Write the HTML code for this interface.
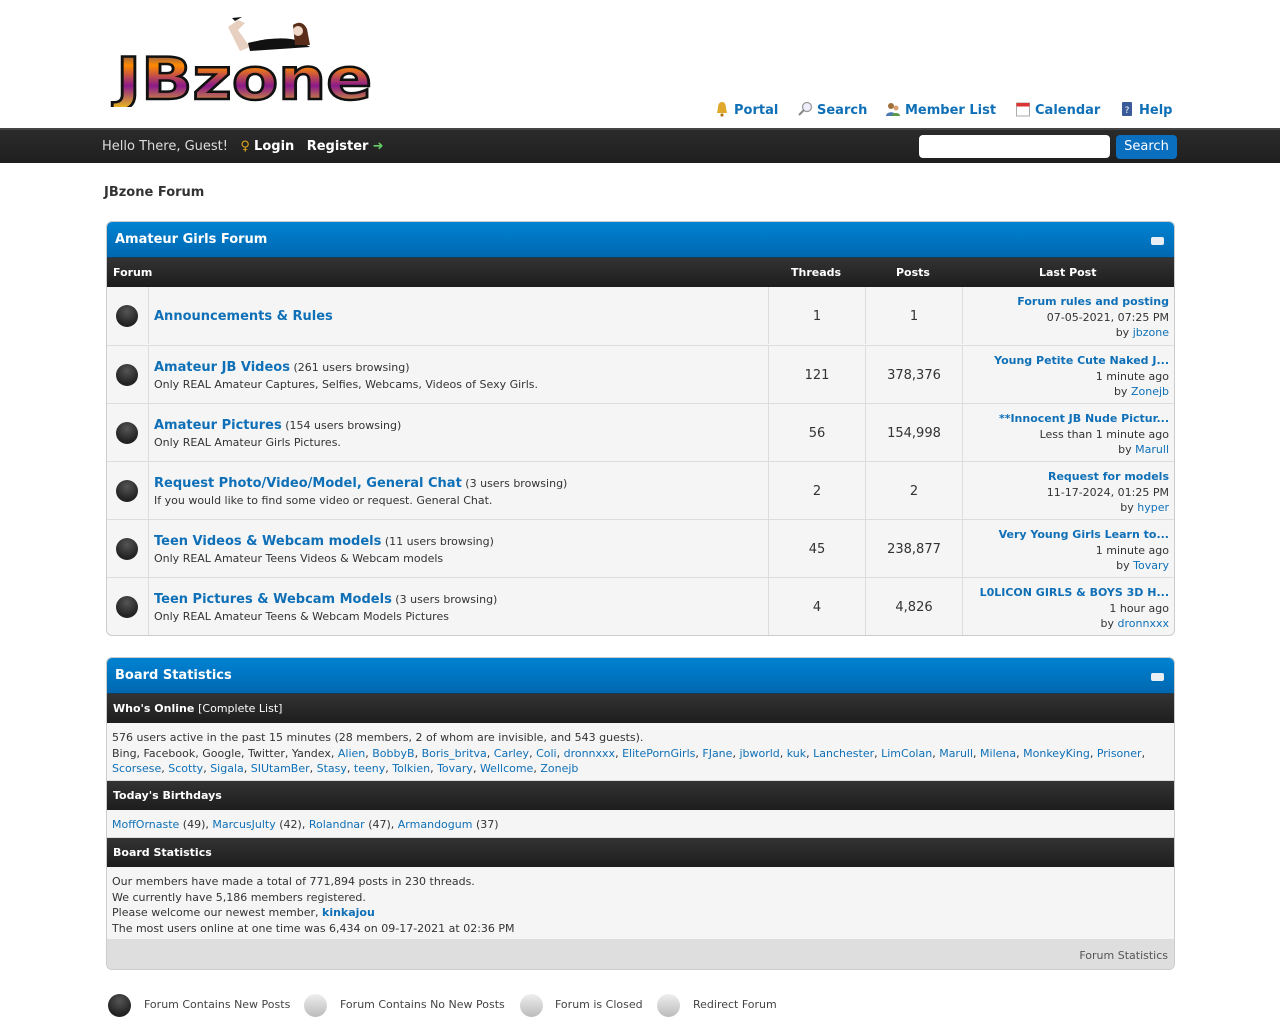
<!DOCTYPE html>
<html><head><meta charset="utf-8"><style>
*{box-sizing:border-box;margin:0;padding:0}
body{width:1280px;height:1024px;overflow:hidden;background:#fff;font-family:"DejaVu Sans","Liberation Sans",sans-serif;font-size:11px;color:#333;position:relative}
a{color:#0f70b7;text-decoration:none}
.abs{position:absolute}
.nav{top:128px;left:0;width:1280px;height:35px;background:linear-gradient(#2b2b2b,#1f1f1f);border-top:2px solid #444}
.tl{position:absolute;top:101px;white-space:nowrap}
.tl a{font-weight:bold;font-size:13px;color:#0f70b7}
.ic{display:inline-block;width:16px;height:16px;vertical-align:-3px;margin-right:4px}
.box{position:absolute;left:106px;width:1069px;border:1px solid #ccc;border-radius:6px;overflow:hidden;background:#f5f5f5}
.thead{height:36px;background:linear-gradient(#0083d3,#0067b0);color:#fff;font-weight:bold;font-size:13px;padding:10px 8px;position:relative;border-bottom:1px solid #1a3b55}
.thead .tg{position:absolute;right:10px;top:15px;width:13px;height:8px;background:#e8eef4;border-radius:2px}
.tcat{background:linear-gradient(#333,#1d1d1d);color:#fff;font-weight:bold;font-size:11px;height:29px;line-height:30px;padding:0 6px;position:relative}
.row{height:58px;position:relative;border-top:1px solid #ddd}
.c{position:absolute;top:0;height:57px;border-left:1px solid #ddd}
.dot{position:absolute;left:9px;top:18px;width:22px;height:22px;border-radius:50%;background:radial-gradient(circle at 50% 30%,#555,#222 70%)}
.fn{font-size:13px;font-weight:bold;color:#0f70b7}
.num{text-align:center;line-height:59px;font-size:13px}
.lp{text-align:right;padding:7px 6px 0 0;line-height:15.5px}
.trow{padding:8px 6px;line-height:15.5px;border-bottom:1px solid #ddd}
</style></head><body>

<svg class="abs" style="left:110px;top:15px" width="270" height="92">
<defs><linearGradient id="g" x1="0" y1="0" x2="0" y2="1"><stop offset="0" stop-color="#223399"/><stop offset=".3" stop-color="#ff8a00"/><stop offset=".6" stop-color="#8b1a8b"/><stop offset="1" stop-color="#ffe000"/></linearGradient></defs>
<path d="M118 12 L128 5 L135 8 L128 15 L140 32 L130 36Z" fill="#e8d0c0"/>
<path d="M125 6 L122 3 L132 2 Z" fill="#111"/>
<path d="M138 28 Q170 20 190 26 L200 32 L140 36Z" fill="#111"/>
<path d="M183 10 Q192 4 197 14 L200 30 L185 30Z" fill="#5a2d1a"/>
<circle cx="188" cy="16" r="5" fill="#f0d8c8"/>
<text x="6" y="84" font-family="DejaVu Sans,sans-serif" font-weight="bold" font-size="58" fill="url(#g)" stroke="#111" stroke-width="2.5" textLength="256" lengthAdjust="spacingAndGlyphs">JBzone</text>
</svg>

<div class="tl" style="left:714px"><svg class="ic" viewBox="0 0 16 16"><path d="M8 1C5 1 4 4 4 7L3 12H13L12 7C12 4 11 1 8 1Z" fill="#e0a82a"/><circle cx="8" cy="14" r="1.6" fill="#b07818"/></svg><a>Portal</a></div>
<div class="tl" style="left:797px"><svg class="ic" viewBox="0 0 16 16"><circle cx="10" cy="6" r="4.5" fill="#eef" stroke="#999" stroke-width="1.3"/><path d="M7 9L2 14" stroke="#888" stroke-width="2"/></svg><a>Search</a></div>
<div class="tl" style="left:885px"><svg class="ic" viewBox="0 0 16 16"><circle cx="6" cy="5" r="3" fill="#a0703a"/><path d="M1 15C1 10 11 10 11 15Z" fill="#4a7ab0"/><circle cx="11" cy="7" r="2.5" fill="#d8a070"/><path d="M7 15C7 11 15 11 15 15Z" fill="#5a9a40"/></svg><a>Member List</a></div>
<div class="tl" style="left:1015px"><svg class="ic" viewBox="0 0 16 16"><rect x="1.5" y="2" width="13" height="13" fill="#fff" stroke="#aaa"/><rect x="1.5" y="2" width="13" height="3.5" fill="#d33"/></svg><a>Calendar</a></div>
<div class="tl" style="left:1119px"><svg class="ic" viewBox="0 0 16 16"><rect x="3" y="1" width="10" height="14" rx="1" fill="#3a5a9a"/><text x="8" y="12" font-size="9" fill="#fff" text-anchor="middle" font-family="DejaVu Sans">?</text></svg><a>Help</a></div>

<div class="abs nav"></div>
<div class="abs" style="top:139px;left:102px;color:#ddd;font-size:13px">Hello There, Guest!&nbsp;&nbsp; <span style="color:#d9a21b">♀</span> <b style="color:#fff">Login</b>&nbsp;&nbsp; <b style="color:#fff">Register</b> <span style="color:#6c6">➜</span></div>
<div class="abs" style="top:135px;left:919px;width:191px;height:23px;background:#fff;border-radius:4px"></div>
<div class="abs" style="top:135px;left:1116px;width:61px;height:24px;background:#0b6fc0;border-radius:4px;color:#fff;font-size:13px;text-align:center;line-height:24px">Search</div>

<div class="abs" style="top:185px;left:104px;font-weight:bold;font-size:13px;color:#333">JBzone Forum</div>

<div class="box" style="top:221px;height:415px">
<div class="thead">Amateur Girls Forum<div class="tg"></div></div>
<div class="tcat">Forum<span class="abs" style="left:684px">Threads</span><span class="abs" style="left:789px">Posts</span><span class="abs" style="left:932px">Last Post</span></div>
<div class="row" style="border-top:none"><div class="dot"></div><div class="c" style="left:41px;width:620px;padding:22px 5px"><a class="fn">Announcements &amp; Rules</a></div><div class="c num" style="left:661px;width:97px">1</div><div class="c num" style="left:758px;width:97px">1</div><div class="c lp" style="left:855px;width:213px"><b><a>Forum rules and posting</a></b><br>07-05-2021, 07:25 PM<br>by <a>jbzone</a></div></div>
<div class="row"><div class="dot"></div><div class="c" style="left:41px;width:620px;padding:13px 5px;line-height:17px"><a class="fn">Amateur JB Videos</a> (261 users browsing)<br>Only REAL Amateur Captures, Selfies, Webcams, Videos of Sexy Girls.</div><div class="c num" style="left:661px;width:97px">121</div><div class="c num" style="left:758px;width:97px">378,376</div><div class="c lp" style="left:855px;width:213px"><b><a>Young Petite Cute Naked J...</a></b><br>1 minute ago<br>by <a>Zonejb</a></div></div>
<div class="row"><div class="dot"></div><div class="c" style="left:41px;width:620px;padding:13px 5px;line-height:17px"><a class="fn">Amateur Pictures</a> (154 users browsing)<br>Only REAL Amateur Girls Pictures.</div><div class="c num" style="left:661px;width:97px">56</div><div class="c num" style="left:758px;width:97px">154,998</div><div class="c lp" style="left:855px;width:213px"><b><a>**Innocent JB Nude Pictur...</a></b><br>Less than 1 minute ago<br>by <a>Marull</a></div></div>
<div class="row"><div class="dot"></div><div class="c" style="left:41px;width:620px;padding:13px 5px;line-height:17px"><a class="fn">Request Photo/Video/Model, General Chat</a> (3 users browsing)<br>If you would like to find some video or request. General Chat.</div><div class="c num" style="left:661px;width:97px">2</div><div class="c num" style="left:758px;width:97px">2</div><div class="c lp" style="left:855px;width:213px"><b><a>Request for models</a></b><br>11-17-2024, 01:25 PM<br>by <a>hyper</a></div></div>
<div class="row"><div class="dot"></div><div class="c" style="left:41px;width:620px;padding:13px 5px;line-height:17px"><a class="fn">Teen Videos &amp; Webcam models</a> (11 users browsing)<br>Only REAL Amateur Teens Videos &amp; Webcam models</div><div class="c num" style="left:661px;width:97px">45</div><div class="c num" style="left:758px;width:97px">238,877</div><div class="c lp" style="left:855px;width:213px"><b><a>Very Young Girls Learn to...</a></b><br>1 minute ago<br>by <a>Tovary</a></div></div>
<div class="row"><div class="dot"></div><div class="c" style="left:41px;width:620px;padding:13px 5px;line-height:17px"><a class="fn">Teen Pictures &amp; Webcam Models</a> (3 users browsing)<br>Only REAL Amateur Teens &amp; Webcam Models Pictures</div><div class="c num" style="left:661px;width:97px">4</div><div class="c num" style="left:758px;width:97px">4,826</div><div class="c lp" style="left:855px;width:213px"><b><a>L0LICON GIRLS &amp; BOYS 3D H...</a></b><br>1 hour ago<br>by <a>dronnxxx</a></div></div>
</div>

<div class="box" style="top:657px;height:313px">
<div class="thead">Board Statistics<div class="tg"></div></div>
<div class="tcat">Who's Online <span style="font-weight:normal">[Complete List]</span></div>
<div class="trow" style="height:58px;padding-top:7px;padding-left:5px">576 users active in the past 15 minutes (28 members, 2 of whom are invisible, and 543 guests).<br>Bing, Facebook, Google, Twitter, Yandex, <a>Alien</a>, <a>BobbyB</a>, <a>Boris_britva</a>, <a>Carley</a>, <a>Coli</a>, <a>dronnxxx</a>, <a>ElitePornGirls</a>, <a>FJane</a>, <a>jbworld</a>, <a>kuk</a>, <a>Lanchester</a>, <a>LimColan</a>, <a>Marull</a>, <a>Milena</a>, <a>MonkeyKing</a>, <a>Prisoner</a>,<br><a>Scorsese</a>, <a>Scotty</a>, <a>Sigala</a>, <a>SIUtamBer</a>, <a>Stasy</a>, <a>teeny</a>, <a>Tolkien</a>, <a>Tovary</a>, <a>Wellcome</a>, <a>Zonejb</a></div>
<div class="tcat">Today's Birthdays</div>
<div class="trow" style="height:28px;padding-top:7px;padding-left:5px"><a>MoffOrnaste</a> (49), <a>MarcusJulty</a> (42), <a>Rolandnar</a> (47), <a>Armandogum</a> (37)</div>
<div class="tcat">Board Statistics</div>
<div class="trow" style="height:73px;padding-top:7px;padding-left:5px">Our members have made a total of 771,894 posts in 230 threads.<br>We currently have 5,186 members registered.<br>Please welcome our newest member, <b><a>kinkajou</a></b><br>The most users online at one time was 6,434 on 09-17-2021 at 02:36 PM</div>
<div style="height:30px;background:#dedede;text-align:right;padding:9px 6px;color:#555">Forum Statistics</div>
</div>

<div class="abs" style="top:993px;left:108px;width:700px;height:24px;color:#444">
<span class="abs" style="left:0;top:1px;width:23px;height:23px;border-radius:50%;background:radial-gradient(circle at 50% 30%,#555,#222 70%)"></span><span class="abs" style="left:36px;top:5px">Forum Contains New Posts</span>
<span class="abs" style="left:196px;top:1px;width:23px;height:23px;border-radius:50%;background:linear-gradient(#eee,#bbb)"></span><span class="abs" style="left:232px;top:5px">Forum Contains No New Posts</span>
<span class="abs" style="left:412px;top:1px;width:23px;height:23px;border-radius:50%;background:linear-gradient(#eee,#bbb)"></span><span class="abs" style="left:447px;top:5px">Forum is Closed</span>
<span class="abs" style="left:549px;top:1px;width:23px;height:23px;border-radius:50%;background:linear-gradient(#eee,#bbb)"></span><span class="abs" style="left:585px;top:5px">Redirect Forum</span>
</div>
</body></html>
